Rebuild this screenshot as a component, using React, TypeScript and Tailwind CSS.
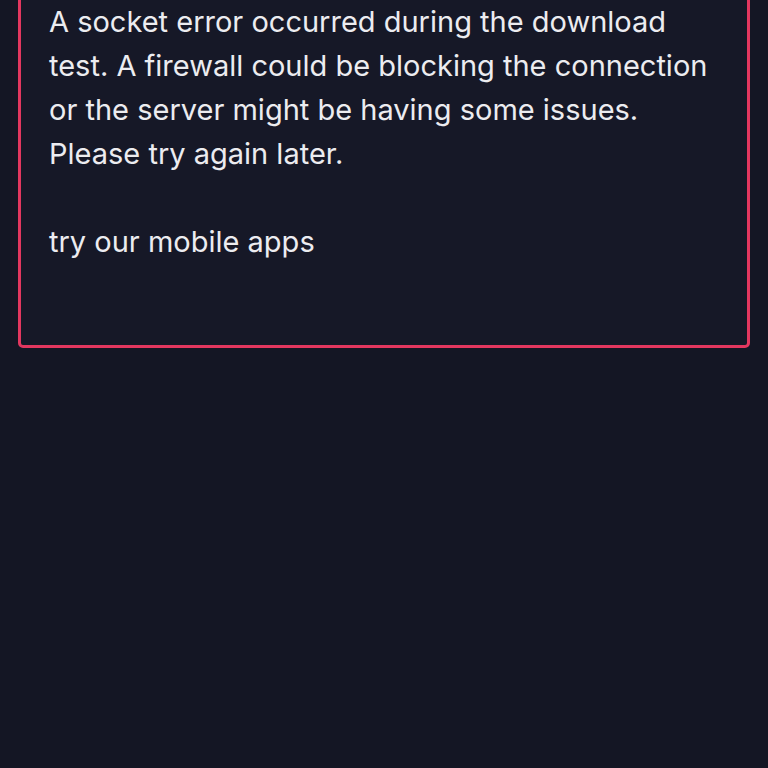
export default function App() {
  return (
    <div className="min-h-screen bg-[#141624] px-[18px] overflow-hidden" style={{ fontFamily: 'Inter, "Open Sans", sans-serif' }}>
      {/* Error card */}
      <div className="-mt-[31px] rounded-[5px] border-[3px] border-[#e3375f] bg-[#161827] px-[28px] pt-[28px] pb-[81px] text-[#ececf0] text-[29px] leading-[44px]">
        <p>
          A socket error occurred during the download test. A firewall could be blocking the connection or the server might be having some issues. Please try again later.
        </p>
        <p className="mt-[44px]">try our mobile apps</p>
      </div>
    </div>
  )
}
